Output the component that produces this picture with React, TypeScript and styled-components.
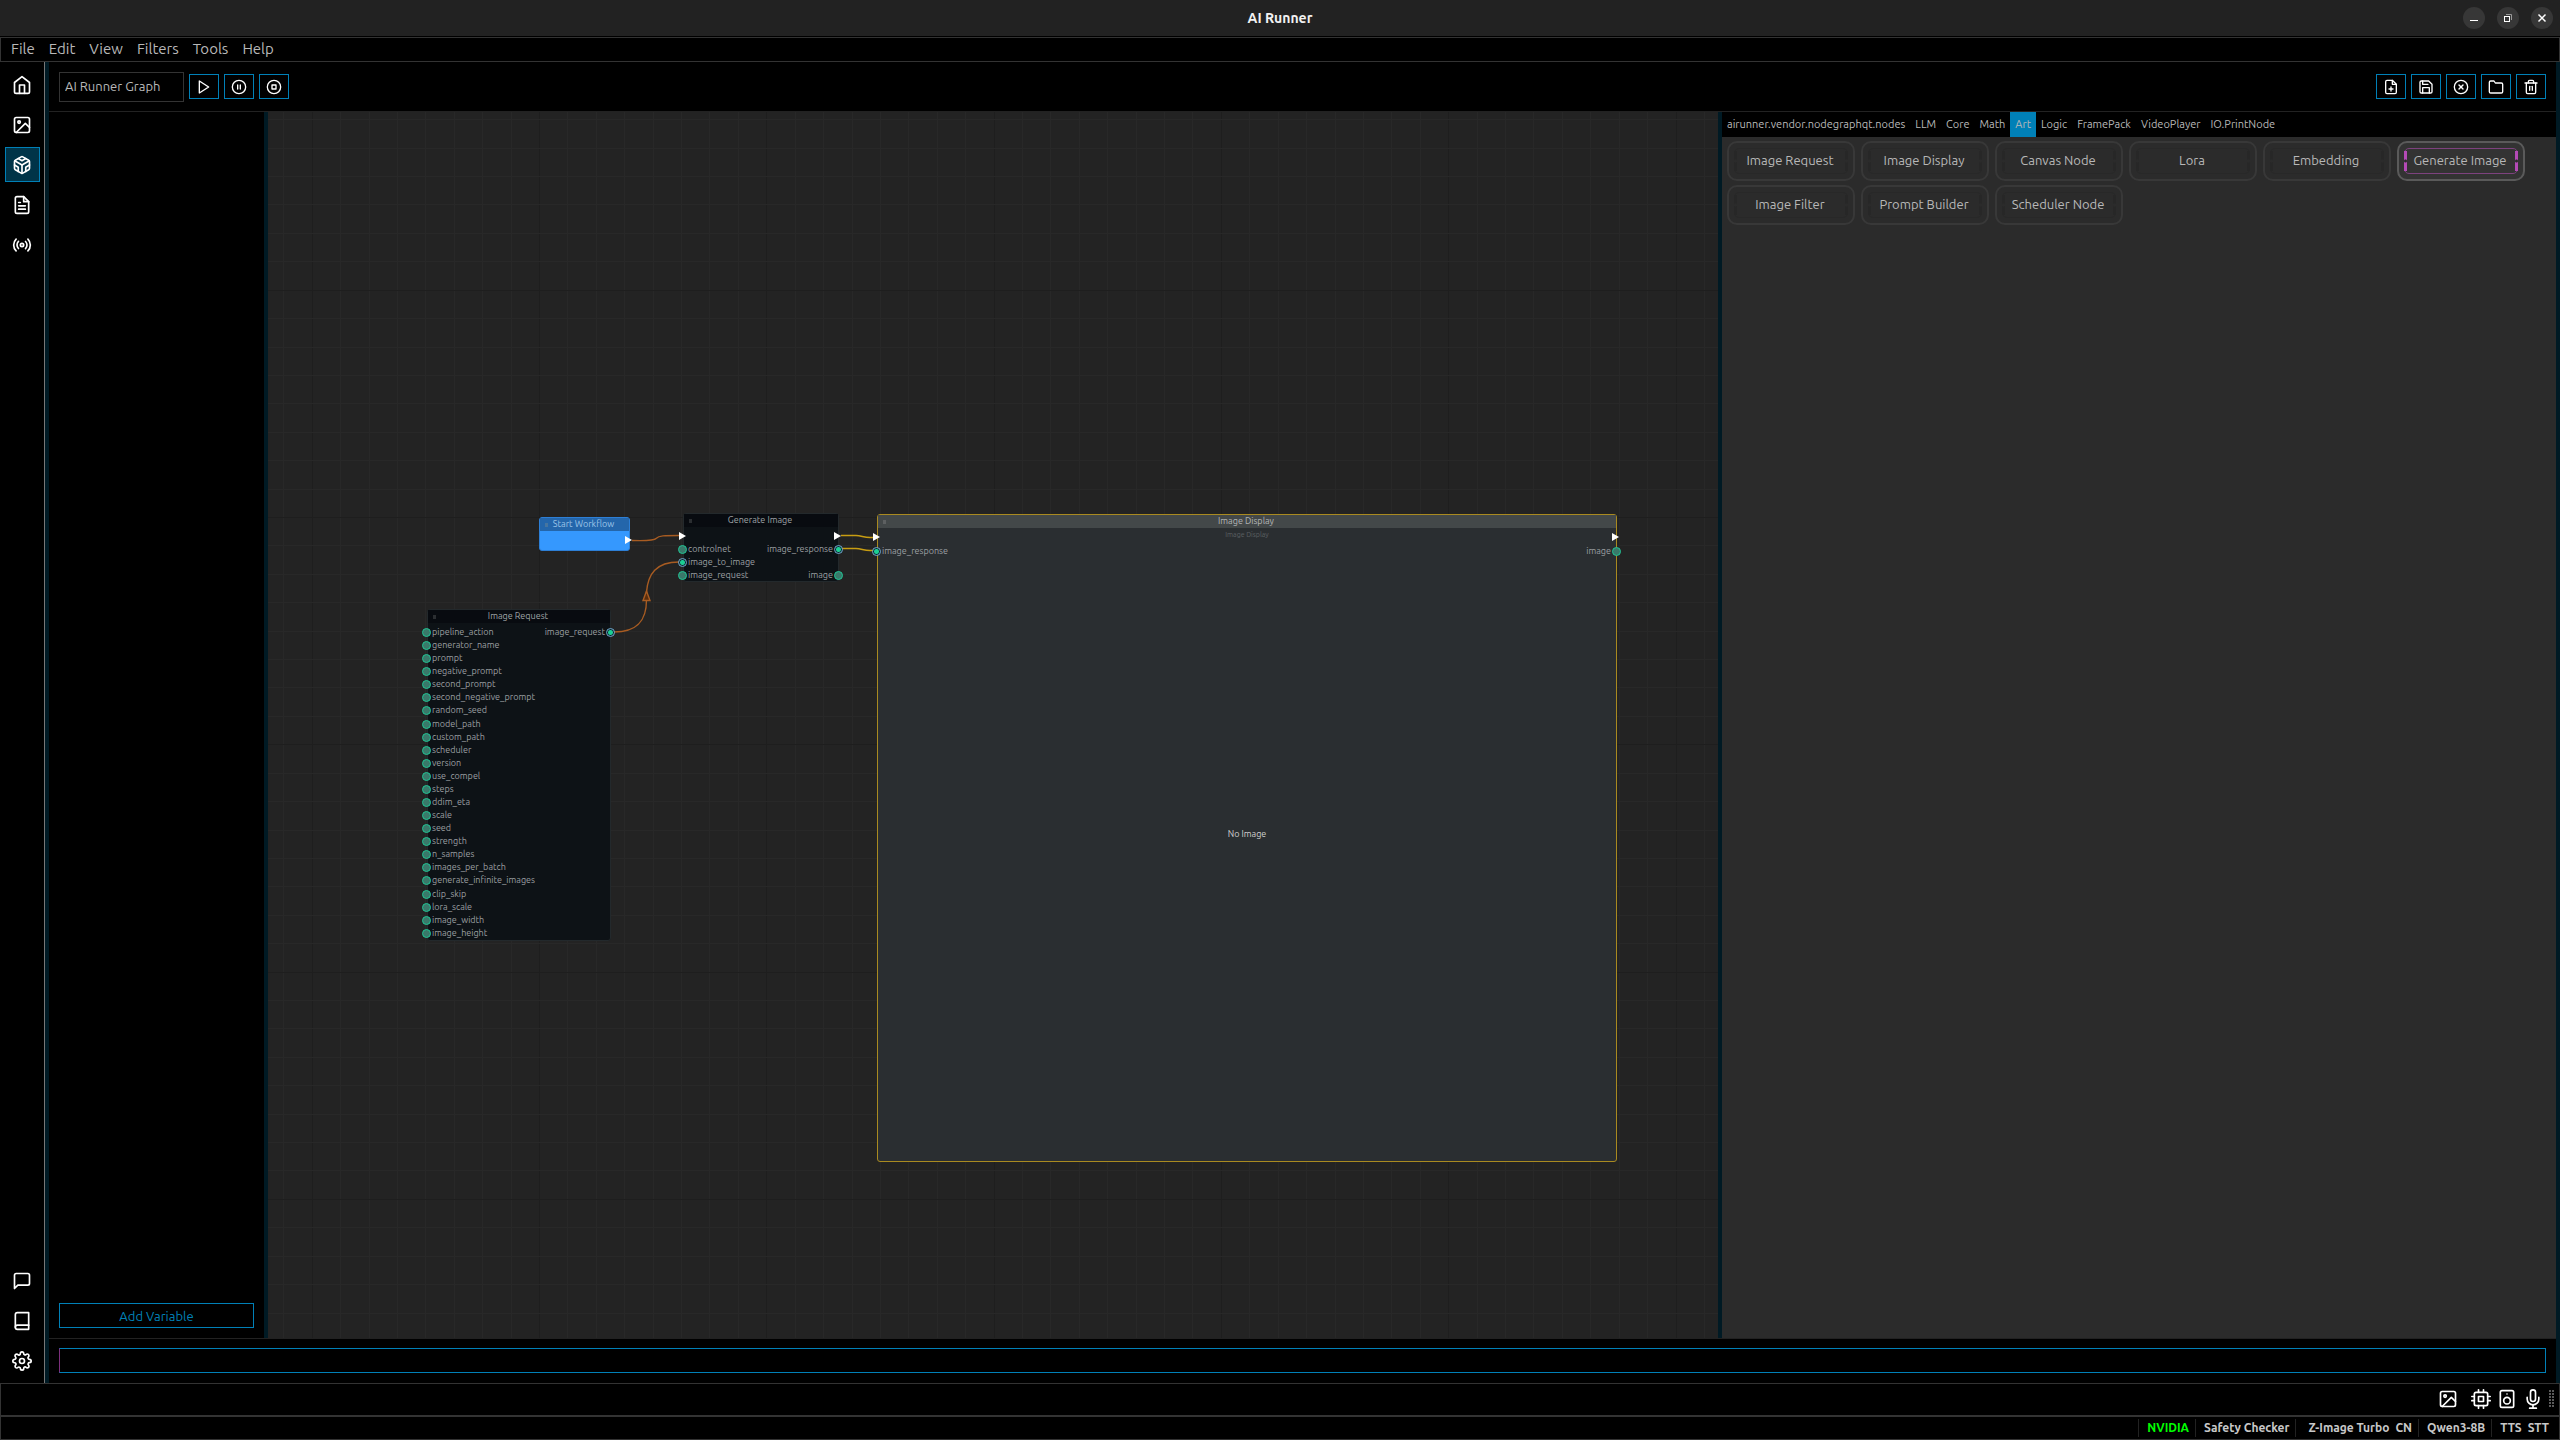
import React from "react";
import styled, { createGlobalStyle, css } from "styled-components";
import {
  FiBook, FiCodesandbox, FiCpu, FiFilePlus, FiFileText, FiFolder, FiHome, FiImage, FiMessageSquare,
  FiMic, FiPauseCircle, FiPlay, FiRadio, FiSave, FiSettings, FiSpeaker, FiStopCircle, FiTrash2, FiXCircle,
} from "react-icons/fi";

const blue = "#0080b7";
const line = "#333333";
const splitter = "#001a24";

const Global = createGlobalStyle`
  * { box-sizing: border-box; }
  html, body, #root { height: 100%; }
  body {
    margin: 0;
    background: #000;
    color: #b8b8b8;
    font-family: Ubuntu, "Noto Sans", sans-serif;
    font-size: 12px;
    overflow: hidden;
  }
  button, input { font: inherit; color: inherit; border-radius: 0; margin: 0; }
  button { background: none; border: 0; padding: 0; }
  ul { list-style: none; margin: 0; padding: 0; }
`;

const Window = styled.div`
  display: flex;
  flex-direction: column;
  height: 100vh;
`;

/* ---- window title and menu ---- */

const TitleBar = styled.header`
  display: grid;
  grid-template-columns: 1fr auto 1fr;
  align-items: center;
  height: 36px;
  margin-bottom: 1px;
  background: #222;
`;

const Title = styled.h1`
  grid-column: 2;
  margin: 0;
  font-size: 14px;
  line-height: 20px;
  font-weight: 600;
  color: #f2f2f2;
`;

const WindowButtons = styled.div`
  display: flex;
  justify-content: flex-end;
  gap: 12px;
  padding-right: 7px;
`;

const WindowButton = styled.button`
  width: 22px;
  height: 22px;
  border-radius: 50%;
  background: #373737;
  color: #fff;
  svg { display: block; }
`;

const MenuBar = styled.nav`
  display: flex;
  align-items: center;
  gap: 14px;
  height: 25px;
  padding: 0 10px 1px;
  border: 1px solid ${line};
`;

const MenuButton = styled.button`
  font-size: 15px;
  line-height: 20px;
`;

/* ---- main area ---- */

const Main = styled.div`
  display: flex;
  flex: 1;
  min-height: 0;
`;

const Sidebar = styled.nav`
  display: flex;
  flex-direction: column;
  gap: 5px;
  width: 45px;
  padding: 5px;
  border-right: 1px solid #777;
`;

const SideButton = styled.button<{ $active?: boolean }>`
  display: flex;
  align-items: center;
  justify-content: center;
  width: 35px;
  height: 35px;
  padding-right: 1px;
  flex: none;
  font-size: 20px;
  color: #fff;
  ${(p) => p.$active && css`
    border: 1px solid ${blue};
    background: #003448;
  `}
`;

const Spacer = styled.div`
  flex: 1;
`;

const Splitter = styled.div`
  width: 4px;
  flex: none;
  background: ${splitter};
`;

const Workspace = styled.main`
  display: flex;
  flex-direction: column;
  flex: 1;
  min-width: 0;
`;

const Toolbar = styled.div`
  display: flex;
  align-items: center;
  gap: 5px;
  height: 50px;
  padding: 0 10px;
  border-bottom: 1px solid #222;
`;

const NameInput = styled.input`
  width: 125px;
  height: 30px;
  padding: 0 5px 1px;
  border: 1px solid ${line};
  background: #000;
  font-size: 13px;
`;

const ToolButton = styled.button`
  display: flex;
  align-items: center;
  justify-content: center;
  width: 30px;
  height: 25px;
  border: 1px solid ${blue};
  color: #fff;
  font-size: 16px;
`;

const Panes = styled.div`
  display: flex;
  flex: 1;
  min-height: 0;
  border-bottom: 1px solid #222;
`;

const Variables = styled.aside`
  display: flex;
  flex-direction: column;
  justify-content: flex-end;
  width: 215px;
  padding: 10px;
`;

const AddButton = styled.button`
  height: 25px;
  border: 1px solid ${blue};
  color: ${blue};
  font-size: 13px;
  line-height: 20px;
`;

const PromptRow = styled.div`
  display: flex;
  padding: 9px 10px 10px;
`;

const PromptInput = styled.input`
  flex: 1;
  height: 25px;
  padding: 0 5px;
  border: 1px solid ${blue};
  border-left-color: #7d2f7d;
  background: #000;
`;

/* ---- node graph ---- */

const Canvas = styled.section`
  position: relative;
  flex: 1;
  min-width: 0;
  overflow: hidden;
  background: #232323;
`;

const Drawing = styled.svg`
  position: absolute;
  inset: 0;
  width: 100%;
  height: 100%;
`;

type Tone = "dark" | "blue" | "selected";
const tones = {
  dark: { body: "#0d1216", head: "#080b10", edge: "#23292c", dot: "#2b2e31", title: "#9fa3a6" },
  blue: { body: "#3598fe", head: "#2466ab", edge: "#2d7fd6", dot: "#47759f", title: "#9cc4e8" },
  selected: { body: "#2a2e31", head: "#434849", edge: "#a98a20", dot: "#5d6061", title: "#b4b6b6" },
};

const Node = styled.article<{ $x: number; $y: number; $w: number; $h: number; $tone: Tone }>`
  position: absolute;
  left: ${(p) => p.$x}px;
  top: ${(p) => p.$y}px;
  width: ${(p) => p.$w}px;
  height: ${(p) => p.$h}px;
  border: 1px solid ${(p) => tones[p.$tone].edge};
  border-radius: 3px;
  background: ${(p) => tones[p.$tone].body};
  font-size: 9px;
  line-height: 13px;
  color: #9b9fa1;
`;

const NodeHead = styled.h2<{ $tone: Tone }>`
  display: flex;
  align-items: center;
  height: 13px;
  margin: 0;
  padding: 0 10px 0 5px;
  background: ${(p) => tones[p.$tone].head};
  color: ${(p) => tones[p.$tone].title};
  font-size: 9px;
  line-height: 13px;
  font-weight: 400;
  &::before {
    content: "";
    width: 3px;
    height: 4px;
    background: ${(p) => tones[p.$tone].dot};
  }
  span { flex: 1; text-align: center; }
`;

const Subtitle = styled.p`
  margin: 0;
  height: 0;
  font-size: 7px;
  line-height: 13px;
  text-align: center;
  color: #5c6063;
`;

const ExecRow = styled.div`
  display: flex;
  height: 14px;
  align-items: center;
  margin: 2px -3px 0 -5px;
`;

const ExecPort = styled.i<{ $right?: boolean }>`
  border-left: 7px solid #fff;
  border-top: 4px solid transparent;
  border-bottom: 4px solid transparent;
  ${(p) => p.$right && "margin-left: auto;"}
`;

const Ports = styled.div<{ $top?: number }>`
  display: flex;
  justify-content: space-between;
  margin: ${(p) => p.$top || 0}px -5px 0 -6px;
`;

const PortList = styled.ul<{ $span?: number }>`
  display: flex;
  flex-direction: column;
  justify-content: space-between;
  ${(p) => p.$span && `height: ${p.$span}px;`}
`;

const PortItem = styled.li<{ $right?: boolean }>`
  display: flex;
  align-items: center;
  gap: 1px;
  height: 13px;
  flex-direction: ${(p) => (p.$right ? "row-reverse" : "row")};
`;

const Dot = styled.i<{ $linked?: boolean }>`
  flex: none;
  width: 9px;
  height: 9px;
  border-radius: 50%;
  border: 1px solid ${(p) => (p.$linked ? "#6fa8cc" : "#1fc493")};
  background: ${(p) => (p.$linked ? "radial-gradient(circle, #1ccf94 0 2px, #0d2730 3px)" : "#39796a")};
`;

const NoImage = styled.div`
  display: grid;
  place-items: center;
  height: 552px;
  color: #d0d0d0;
`;

/* ---- node library ---- */

const Library = styled.aside`
  display: flex;
  flex-direction: column;
  width: 834px;
  background: #2b2b2b;
`;

const Tabs = styled.div`
  display: flex;
  height: 25px;
  background: #000;
`;

const Tab = styled.button<{ $active?: boolean }>`
  padding: 0 5px 2px;
  font-size: 11px;
  ${(p) => p.$active && `background: ${blue};`}
`;

const NodeGrid = styled.div`
  display: grid;
  grid-template-columns: repeat(6, 128px);
  gap: 4px 6px;
  padding: 4px 5px;
`;

const Bar = css`
  content: "";
  position: absolute;
  top: 2px;
  bottom: 2px;
  width: 3px;
`;

const NodeLabel = styled.span<{ $active?: boolean }>`
  position: relative;
  display: flex;
  align-items: center;
  justify-content: center;
  height: 26px;
  padding: 0 2px 2px 0;
  border: 1px solid ${(p) => (p.$active ? "#7d427e" : "#282828")};
  border-radius: 5px;
  &::before {
    ${Bar}
    left: -1px;
    background: radial-gradient(circle, #2b2b2b 0 1px, transparent 2px), ${(p) => (p.$active ? "#b44ab6" : "#272727")};
  }
  &::after {
    ${Bar}
    right: -1px;
    background: radial-gradient(circle, #2b2b2b 0 1px, transparent 2px), ${(p) => (p.$active ? "#b44ab6" : "#272727")};
  }
`;

const NodeButton = styled.button<{ $active?: boolean }>`
  height: 40px;
  padding: 0 5px;
  border: 2px solid ${(p) => (p.$active ? "#5a5a5a" : "#383838")};
  border-radius: 10px;
  background: ${(p) => (p.$active ? "#333" : "#2b2b2b")};
  font-size: 13px;
`;

/* ---- status ---- */

const IconBar = styled.div`
  display: flex;
  align-items: center;
  justify-content: flex-end;
  gap: 6px;
  height: 33px;
  padding: 0 4px 1px;
  border: 1px solid ${line};
  color: #fff;
  font-size: 20px;
`;

const IconButton = styled.button<{ $wide?: boolean }>`
  display: flex;
  color: #fff;
  ${(p) => p.$wide && "margin-right: 7px;"}
`;

const StatusBar = styled.footer`
  display: flex;
  justify-content: flex-end;
  align-items: center;
  height: 24px;
  padding: 0 4px;
  border: 1px solid ${line};
  font-size: 12px;
  font-weight: 600;
  color: #c8c8c8;
`;

const StatusGroup = styled.div<{ $ok?: boolean; $indent?: boolean }>`
  display: flex;
  gap: 6px;
  padding: 0 6px 0 ${(p) => (p.$indent ? 12 : 8)}px;
  line-height: 18px;
  border-left: 1px solid #222;
  white-space: nowrap;
  ${(p) => p.$ok && "color: #00ff00;"}
`;

const inputs = [
  "pipeline_action", "generator_name", "prompt", "negative_prompt", "second_prompt", "second_negative_prompt",
  "random_seed", "model_path", "custom_path", "scheduler", "version", "use_compel", "steps", "ddim_eta", "scale",
  "seed", "strength", "n_samples", "images_per_batch", "generate_infinite_images", "clip_skip", "lora_scale",
  "image_width", "image_height",
];

const tabs = [
  "airunner.vendor.nodegraphqt.nodes", "LLM", "Core", "Math", "Art", "Logic", "FramePack", "VideoPlayer",
  "IO.PrintNode",
];

const artNodes = [
  "Image Request", "Image Display", "Canvas Node", "Lora", "Embedding", "Generate Image", "Image Filter",
  "Prompt Builder", "Scheduler Node",
];

function Port({ name, right, linked }: { name: string; right?: boolean; linked?: boolean }) {
  return (
    <PortItem $right={right}>
      <Dot $linked={linked} />
      {name}
    </PortItem>
  );
}

function Header({ tone, children }: { tone: Tone; children: string }) {
  return (
    <NodeHead $tone={tone}>
      <span>{children}</span>
    </NodeHead>
  );
}

/* Drag handle: two columns of six dots. */
function Grip() {
  return (
    <svg width="6" height="18" fill="#5a5a5a" aria-hidden="true">
      {[0, 3, 6, 9, 12, 15].map((y) => (
        <React.Fragment key={y}>
          <rect x="0" y={y} width="2" height="2" />
          <rect x="3" y={y} width="2" height="2" />
        </React.Fragment>
      ))}
    </svg>
  );
}

/* Every eighth grid line is a darker, major one. */
function Grid() {
  const step = 227.3 / 8;
  const lines = Array.from({ length: 140 }, (_, i) => i - 20);
  const colour = (i: number) => (i % 8 === 0 ? "#1e1e1e" : "#282828");
  return (
    <g shapeRendering="crispEdges">
      {lines.map((i) => (
        <rect key={`x${i}`} x={Math.round(271 + i * step)} y="0" width="1" height="4000" fill={colour(i)} />
      ))}
      {lines.map((i) => (
        <rect key={`y${i}`} y={Math.round(405 + i * step)} x="0" height="1" width="4000" fill={colour(i)} />
      ))}
    </g>
  );
}

function Graph() {
  return (
    <Canvas aria-label="Node graph">
      <Drawing>
        <Grid />
        <g fill="none" strokeWidth="1.4">
          <g stroke="#a85c22">
            <path d="M364 428.5C382 429 387 428 388 426.5C391 423.5 396 423.5 411 423.5" />
            <path d="M346 520C370 520 378.5 508 378.5 488V480C380 462 388 450 411 450" />
            <path d="M378.5 479L375 488.5H382Z" fill="#5a2d0c" />
          </g>
          <g stroke="#c89d12">
            <path d="M573 423.5H588C594 424 596 425.5 602 425.5H606" />
            <path d="M574 436.5H588C594 437 596 438.5 602 438.5H606" />
          </g>
        </g>
      </Drawing>

      <Node $tone="blue" $x={271} $y={405} $w={91} $h={34}>
        <Header tone="blue">Start Workflow</Header>
        <ExecRow><ExecPort $right /></ExecRow>
      </Node>

      <Node $tone="dark" $x={415} $y={401} $w={156} $h={69}>
        <Header tone="dark">Generate Image</Header>
        <ExecRow><ExecPort /><ExecPort $right /></ExecRow>
        <Ports>
          <PortList>
            <Port name="controlnet" />
            <Port name="image_to_image" linked />
            <Port name="image_request" />
          </PortList>
          <PortList>
            <Port name="image_response" right linked />
            <Port name="image" right />
          </PortList>
        </Ports>
      </Node>

      <Node $tone="dark" $x={159} $y={497} $w={184} $h={332}>
        <Header tone="dark">Image Request</Header>
        <Ports $top={3}>
          <PortList $span={314}>
            {inputs.map((name) => <Port key={name} name={name} />)}
          </PortList>
          <PortList $span={13}>
            <Port name="image_request" right linked />
          </PortList>
        </Ports>
      </Node>

      <Node $tone="selected" $x={609} $y={402} $w={740} $h={648}>
        <Header tone="selected">Image Display</Header>
        <Subtitle>Image Display</Subtitle>
        <ExecRow><ExecPort /><ExecPort $right /></ExecRow>
        <Ports $top={1}>
          <PortList><Port name="image_response" linked /></PortList>
          <PortList><Port name="image" right /></PortList>
        </Ports>
        <NoImage>No Image</NoImage>
      </Node>
    </Canvas>
  );
}

export default function App() {
  return (
    <>
      <Global />
      <Window>
        <TitleBar>
          <Title>AI Runner</Title>
          <WindowButtons>
            <WindowButton aria-label="Minimize">
              <svg width="22" height="22"><rect x="7" y="13" width="8" height="1" fill="#fff" /></svg>
            </WindowButton>
            <WindowButton aria-label="Restore">
              <svg width="22" height="22" fill="none">
                <path d="M9 7.5H14.5V13" stroke="#999" />
                <rect x="7.5" y="9.5" width="5" height="5" stroke="#fff" />
              </svg>
            </WindowButton>
            <WindowButton aria-label="Close">
              <svg width="22" height="22"><path d="M7.5 7.5L14.5 14.5M14.5 7.5L7.5 14.5" stroke="#fff" strokeWidth="1.5" /></svg>
            </WindowButton>
          </WindowButtons>
        </TitleBar>
        <MenuBar>
          {["File", "Edit", "View", "Filters", "Tools", "Help"].map((m) => <MenuButton key={m}>{m}</MenuButton>)}
        </MenuBar>

        <Main>
          <Sidebar>
            <SideButton aria-label="Home"><FiHome /></SideButton>
            <SideButton aria-label="Images"><FiImage /></SideButton>
            <SideButton aria-label="Workflows" $active><FiCodesandbox /></SideButton>
            <SideButton aria-label="Documents"><FiFileText /></SideButton>
            <SideButton aria-label="Broadcast"><FiRadio /></SideButton>
            <Spacer />
            <SideButton aria-label="Chat"><FiMessageSquare /></SideButton>
            <SideButton aria-label="Knowledge"><FiBook /></SideButton>
            <SideButton aria-label="Settings"><FiSettings /></SideButton>
          </Sidebar>
          <Splitter />
          <Workspace>
            <Toolbar>
              <NameInput aria-label="Workflow name" defaultValue="AI Runner Graph" />
              <ToolButton aria-label="Run"><FiPlay /></ToolButton>
              <ToolButton aria-label="Pause"><FiPauseCircle /></ToolButton>
              <ToolButton aria-label="Stop"><FiStopCircle /></ToolButton>
              <Spacer />
              <ToolButton aria-label="New"><FiFilePlus /></ToolButton>
              <ToolButton aria-label="Save"><FiSave /></ToolButton>
              <ToolButton aria-label="Clear"><FiXCircle /></ToolButton>
              <ToolButton aria-label="Open"><FiFolder /></ToolButton>
              <ToolButton aria-label="Delete"><FiTrash2 /></ToolButton>
            </Toolbar>
            <Panes>
              <Variables><AddButton>Add Variable</AddButton></Variables>
              <Splitter />
              <Graph />
              <Splitter />
              <Library>
                <Tabs role="tablist">
                  {tabs.map((t) => (
                    <Tab key={t} role="tab" aria-selected={t === "Art"} $active={t === "Art"}>{t}</Tab>
                  ))}
                </Tabs>
                <NodeGrid>
                  {artNodes.map((n) => (
                    <NodeButton key={n} $active={n === "Generate Image"}>
                      <NodeLabel $active={n === "Generate Image"}>{n}</NodeLabel>
                    </NodeButton>
                  ))}
                </NodeGrid>
              </Library>
            </Panes>
            <PromptRow><PromptInput aria-label="Prompt" /></PromptRow>
          </Workspace>
          <Splitter />
        </Main>

        <IconBar>
          <IconButton aria-label="Art model" $wide><FiImage /></IconButton>
          <IconButton aria-label="Language model"><FiCpu /></IconButton>
          <IconButton aria-label="Speaker"><FiSpeaker /></IconButton>
          <IconButton aria-label="Microphone"><FiMic /></IconButton>
          <Grip />
        </IconBar>
        <StatusBar>
          <StatusGroup $ok>NVIDIA</StatusGroup>
          <StatusGroup>Safety Checker</StatusGroup>
          <StatusGroup $indent><span>Z-Image Turbo</span><span>CN</span></StatusGroup>
          <StatusGroup>Qwen3-8B</StatusGroup>
          <StatusGroup><span>TTS</span><span>STT</span></StatusGroup>
        </StatusBar>
      </Window>
    </>
  );
}
